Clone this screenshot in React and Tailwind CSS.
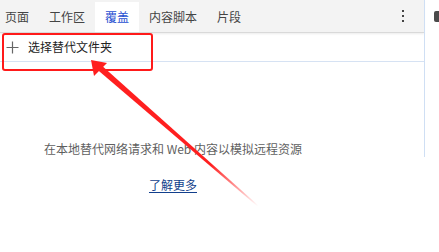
export default function App() {
  const font = { fontFamily: '"Noto Sans CJK SC", "Noto Sans", sans-serif' };
  const tabs = ["页面", "工作区", "覆盖", "内容脚本", "片段"];
  return (
    <div className="relative w-[439px] h-[252px] overflow-hidden bg-white flex" style={font}>
      <div className="w-[424px] flex flex-col">
        <div className="h-[33px] bg-[#f3f3f3] border-b border-[#d9d9d9] flex items-end shadow-[0_1px_2px_rgba(0,0,0,0.08)]">
          <div className="flex ml-[-5px] h-[30px]">
            {tabs.map((t) => (
              <div
                key={t}
                className={
                  "px-[10px] flex items-center text-[12px] leading-none " +
                  (t === "覆盖" ? "bg-white text-[#1f4fd1]" : "text-[#444]")
                }
              >
                {t}
              </div>
            ))}
          </div>
          <div className="flex-1" />
          <div className="h-[32px] w-[30px] mr-[6px] flex flex-col items-center justify-center gap-[3px]">
            <div className="w-[2px] h-[2px] bg-[#444]" />
            <div className="w-[2px] h-[2px] bg-[#444]" />
            <div className="w-[2px] h-[2px] bg-[#444]" />
          </div>
        </div>
        <div className="h-[29px] border-b border-[#d6e2f3] flex items-center pl-[6px]">
          <svg width="13" height="13" viewBox="0 0 13 13" className="mr-[9px]">
            <path d="M6.5 0.5 V12.5 M0.5 6.5 H12.5" stroke="#666" strokeWidth="1.2" fill="none" />
          </svg>
          <span className="text-[12px] text-[#222] leading-none">选择替代文件夹</span>
        </div>
        <div className="w-[346px] pt-[79px] flex flex-col items-center">
          <div className="text-[12px] leading-[16px] text-[#5f5f5f]">在本地替代网络请求和 Web 内容以模拟远程资源</div>
          <div className="mt-[20px] text-[12px] leading-[16px] text-[#123f8c] underline underline-offset-2">了解更多</div>
        </div>
      </div>
      <div className="h-[157px] w-[15px] border-l border-[#cfdff4] pt-[11px] pl-[9px]">
        <div className="w-[8px] h-[11px] rounded-[2px] bg-[#4a4a4a]" />
      </div>

      <div className="absolute left-[2px] top-[33px] w-[151px] h-[38px] border-2 border-[#ff1a1a] rounded-[3px]" />

      <svg className="absolute left-0 top-0 pointer-events-none" width="439" height="252" viewBox="0 0 439 252">
        <defs>
          <linearGradient id="fade" gradientUnits="userSpaceOnUse" x1="100" y1="68" x2="258" y2="206">
            <stop offset="0" stopColor="#ff1f1f" stopOpacity="1" />
            <stop offset="0.7" stopColor="#ff1f1f" stopOpacity="1" />
            <stop offset="1" stopColor="#ff1f1f" stopOpacity="0" />
          </linearGradient>
        </defs>
        <polygon points="91,60 107,63 94,76" fill="#ff1f1f" />
        <polygon points="102,65.8 98,70.2 257.6,206.4 258.4,205.6" fill="url(#fade)" />
      </svg>
    </div>
  );
}
